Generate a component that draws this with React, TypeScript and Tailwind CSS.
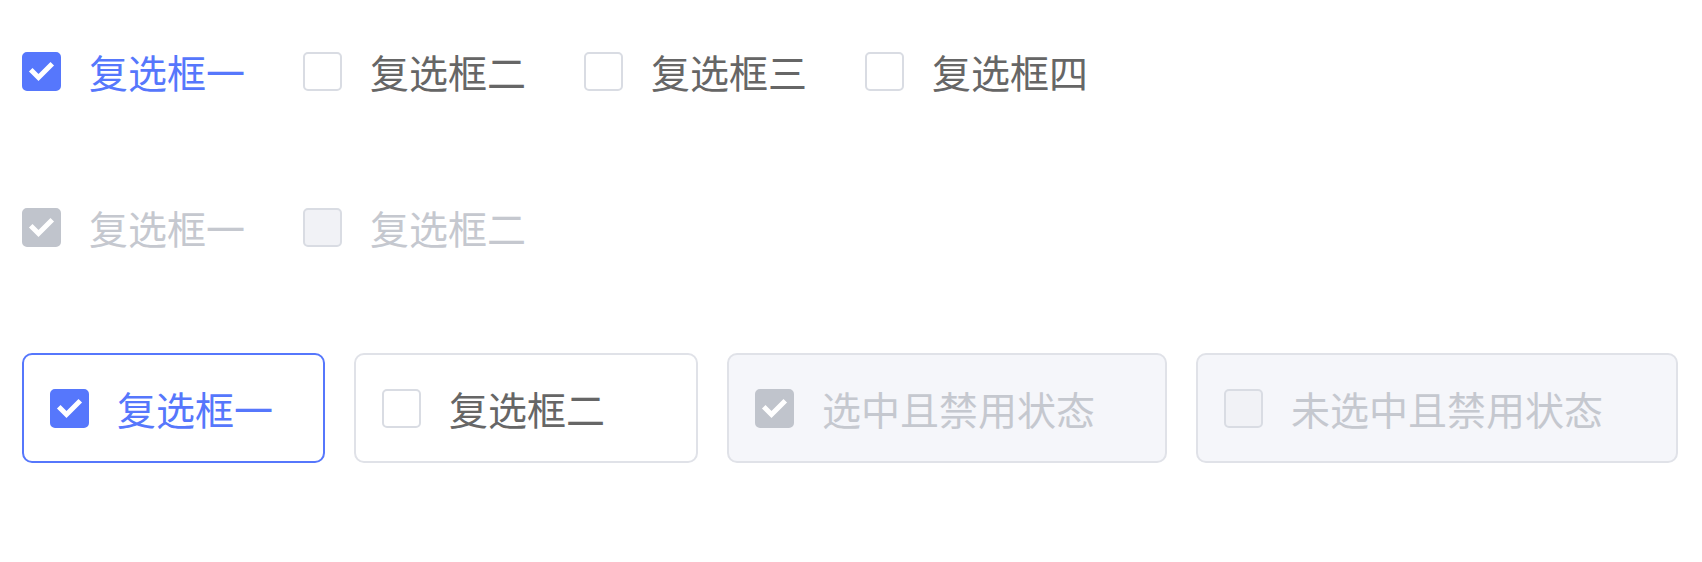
import React from "react";

type BoxState = "checked" | "unchecked" | "disabledChecked" | "disabledUnchecked";

function CheckMark() {
  return (
    <svg width="39" height="39" viewBox="0 0 39 39" className="block">
      <path
        d="M10.5 19.5 L16.5 25.5 L28.5 13.5"
        fill="none"
        stroke="#ffffff"
        strokeWidth="5"
        strokeLinecap="square"
        strokeLinejoin="miter"
      />
    </svg>
  );
}

function Box({ state }: { state: BoxState }) {
  const cls = {
    checked: "bg-[#5677fc] border-[#5677fc]",
    unchecked: "bg-white border-[#d9dce3]",
    disabledChecked: "bg-[#c0c4cc] border-[#c0c4cc]",
    disabledUnchecked: "bg-[#f1f2f6] border-[#d9dce3]",
  }[state];
  const showMark = state === "checked" || state === "disabledChecked";
  return (
    <span
      className={`relative w-[39px] h-[39px] shrink-0 rounded-[5px] border-2 box-border ${cls}`}
    >
      {showMark && (
        <span className="absolute -left-[2px] -top-[2px]">
          <CheckMark />
        </span>
      )}
    </span>
  );
}

function labelColor(state: BoxState) {
  if (state === "checked") return "text-[#5677fc]";
  if (state === "unchecked") return "text-[#666666]";
  return "text-[#c5c8cf]";
}

function Item({ state, label }: { state: BoxState; label: string }) {
  return (
    <label className="flex items-center h-[39px]">
      <Box state={state} />
      <span className={`ml-[28px] text-[39px] leading-none whitespace-nowrap ${labelColor(state)}`}>
        {label}
      </span>
    </label>
  );
}

function Card({ state, label, width }: { state: BoxState; label: string; width: string }) {
  const border = {
    checked: "border-[#5677fc] bg-white",
    unchecked: "border-[#e0e2e8] bg-white",
    disabledChecked: "border-[#e0e2e8] bg-[#f5f6fa]",
    disabledUnchecked: "border-[#e0e2e8] bg-[#f5f6fa]",
  }[state];
  return (
    <div className={`h-[110px] ${width} shrink-0 flex items-center pl-[26px] rounded-[10px] border-2 box-border ${border}`}>
      <Item state={state} label={label} />
    </div>
  );
}

export default function App() {
  return (
    <div
      className="w-[1702px] h-[562px] bg-white pl-[22px] pt-[52px]"
      style={{ fontFamily: '"Noto Sans CJK SC", "Noto Sans", sans-serif' }}
    >
      <div className="flex items-center gap-[58px]">
        <Item state="checked" label="复选框一" />
        <Item state="unchecked" label="复选框二" />
        <Item state="unchecked" label="复选框三" />
        <Item state="unchecked" label="复选框四" />
      </div>

      <div className="flex items-center gap-[58px] mt-[117px]">
        <Item state="disabledChecked" label="复选框一" />
        <Item state="disabledUnchecked" label="复选框二" />
      </div>

      <div className="flex items-center gap-[29px] mt-[106px]">
        <Card state="checked" label="复选框一" width="w-[303px]" />
        <Card state="unchecked" label="复选框二" width="w-[344px]" />
        <Card state="disabledChecked" label="选中且禁用状态" width="w-[440px]" />
        <Card state="disabledUnchecked" label="未选中且禁用状态" width="w-[482px]" />
      </div>
    </div>
  );
}
